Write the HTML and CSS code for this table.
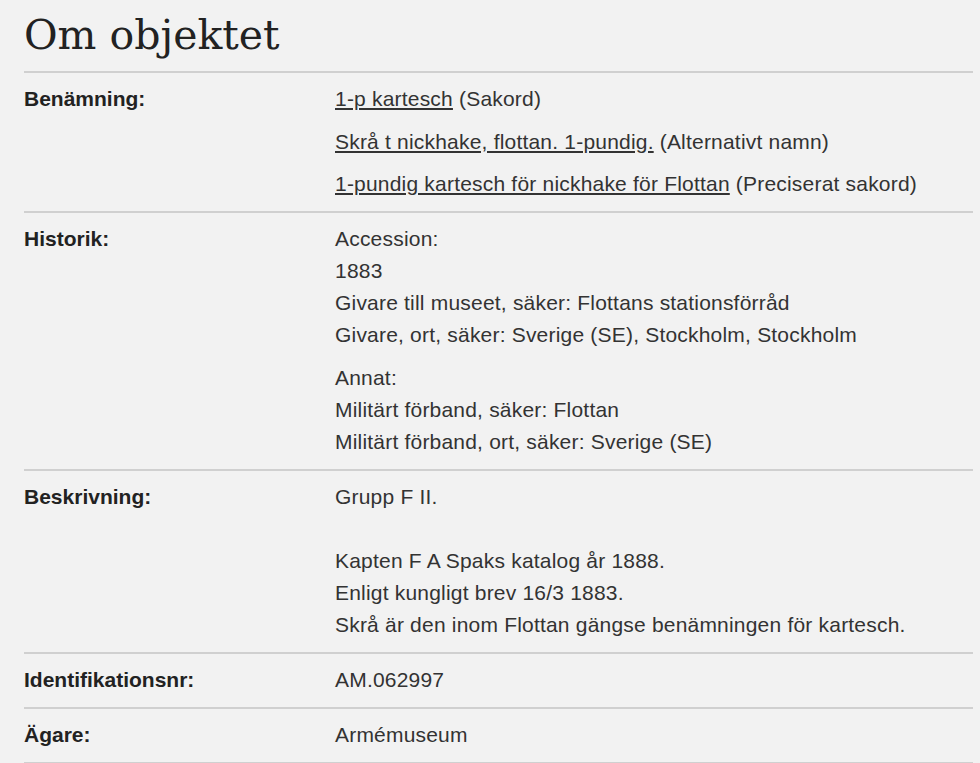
FILE: index.html
```html
<!DOCTYPE html>
<html lang="sv">
<head>
<meta charset="utf-8">
<title>Om objektet</title>
<link rel="stylesheet" href="styles.css">
</head>
<body>
<main class="page">
  <h1 class="title">Om objektet</h1>
  <dl class="facts">
    <div class="row">
      <dt class="label">Benämning:</dt>
      <dd class="value">
        <p class="para"><a class="link" href="#">1-p kartesch</a> (Sakord)</p>
        <p class="para"><a class="link" href="#">Skrå t nickhake, flottan. 1-pundig.</a> (Alternativt namn)</p>
        <p class="para"><a class="link" href="#">1-pundig kartesch för nickhake för Flottan</a> (Preciserat sakord)</p>
      </dd>
    </div>
    <div class="row">
      <dt class="label">Historik:</dt>
      <dd class="value">
        <p class="para">Accession:<br>1883<br>Givare till museet, säker: Flottans stationsförråd<br>Givare, ort, säker: Sverige (SE), Stockholm, Stockholm</p>
        <p class="para">Annat:<br>Militärt förband, säker: Flottan<br>Militärt förband, ort, säker: Sverige (SE)</p>
      </dd>
    </div>
    <div class="row">
      <dt class="label">Beskrivning:</dt>
      <dd class="value">
        <p class="para">Grupp F II.<br><br>Kapten F A Spaks katalog år 1888.<br>Enligt kungligt brev 16/3 1883.<br>Skrå är den inom Flottan gängse benämningen för kartesch.</p>
      </dd>
    </div>
    <div class="row">
      <dt class="label">Identifikationsnr:</dt>
      <dd class="value"><p class="para">AM.062997</p></dd>
    </div>
    <div class="row">
      <dt class="label">Ägare:</dt>
      <dd class="value"><p class="para">Armémuseum</p></dd>
    </div>
  </dl>
</main>
</body>
</html>
```

FILE: styles.css
```css
html, body {
  margin: 0;
  padding: 0;
  background: #f2f2f2;
}

.page {
  padding: 8px 7px 0 24px;
  font-family: "Liberation Sans", Arial, sans-serif;
  color: #333;
}

.title {
  margin: 0;
  height: 63px;
  font-family: "DejaVu Serif", serif;
  font-weight: normal;
  font-size: 41px;
  line-height: 54px;
  color: #222;
}

.facts {
  margin: 0;
  border-top: 2px solid #d0d0d0;
}

.row {
  display: grid;
  grid-template-columns: 311px 1fr;
  padding: 10px 0 11px;
  border-bottom: 2px solid #d0d0d0;
}

.label {
  margin: 0;
  font-weight: bold;
  font-size: 21px;
  line-height: 32px;
  color: #222;
}

.value {
  margin: 0;
  font-size: 21px;
  line-height: 32px;
  letter-spacing: 0.2px;
  display: flex;
  flex-direction: column;
  gap: 10.5px;
}

.para {
  margin: 0;
}

.link {
  color: #333;
  text-decoration: underline;
}
```
